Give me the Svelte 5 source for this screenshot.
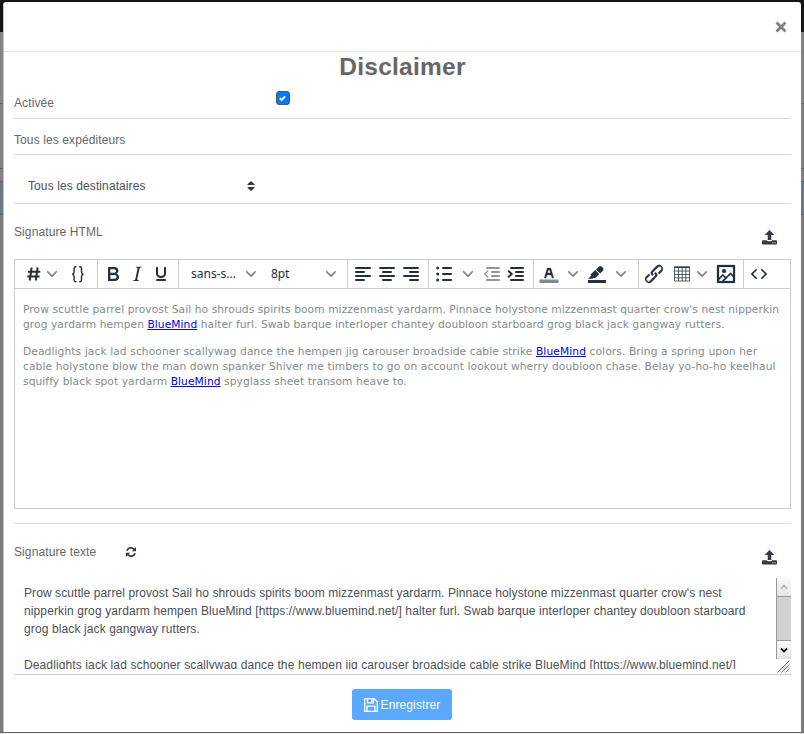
<script>
  let enabled = $state(true);
  const chevron = 'M8.7 2.2c.3-.3.8-.3 1 0 .4.4.4.9 0 1.2L5.7 7.8c-.3.3-.9.3-1.2 0L.2 3.4a.8.8 0 010-1.2c.3-.3.8-.3 1.1 0L5 6l3.7-3.8z';
</script>

{#snippet arrow(cls)}
  <span class="arrow {cls}"><svg width="10" height="10" viewBox="0 0 10 10"><path d={chevron} /></svg></span>
{/snippet}

{#snippet upload()}
  <svg class="upload" width="15" height="15" viewBox="0 0 15 15">
    <path d="M7.5 0L12.3 5H9.3v5H5.7V5H2.7z" />
    <path d="M.8 10.2H4.8q.3 1 1.2 1h3q.9 0 1.2-1h4q.8 0 .8.8v2.6q0 .8-.8.8H.8q-.8 0-.8-.8V11q0-.8.8-.8zM10.3 12.3v.9h1v-.9zm2.2 0v.9h1v-.9z" fill-rule="evenodd" />
  </svg>
{/snippet}

<div class="page">
  <div class="backdrop">
    <div class="band dark"></div>
    <div class="band b1"></div>
    <div class="band b2"></div>
    <div class="band b3"></div>
    <div class="band blue"></div>
    <div class="band rest"></div>
  </div>
  <div class="modal">
    <header><button class="close" aria-label="Fermer"><svg width="12" height="12" viewBox="0 0 12 12"><path d="M1.5 1.5l9 9M10.5 1.5l-9 9" /></svg></button></header>
    <main>
      <h1>Disclaimer</h1>
      <div class="row enable">
        <span>Activée</span>
        <button class="check" role="checkbox" aria-checked={enabled} aria-label="Activée" onclick={() => (enabled = !enabled)}>
          {#if enabled}<svg width="8" height="8" viewBox="0 0 8 8"><path d="M.8 4.2L2.7 6l3.4-3.7" /></svg>{/if}
        </button>
      </div>
      <div class="row senders">Tous les expéditeurs</div>
      <div class="row recipients">
        <span>Tous les destinataires</span>
        <svg width="8" height="10" viewBox="0 0 8 10"><path d="M4 0l3.3 3q.9 1-.4 1H1.1Q-.2 4 .7 3zM4 10L.7 7q-.9-1 .4-1h5.8q1.3 0 .4 1z" /></svg>
      </div>
      <div class="label html"><span>Signature HTML</span>{@render upload()}</div>

      <section class="editor">
        <div class="toolbar">
          <div class="group g1">
            <svg class="ic hash" viewBox="0 0 24 24"><path d="M9.6 5.5L7.8 18.5M15.6 5.5l-1.8 13M6 9.7h12.3M5.3 14.4h12.3" /></svg>
            {@render arrow('narrow')}
            <svg class="ic brace" viewBox="0 0 24 24"><path d="M10.4 4.7h-.6q-1.7 0-1.7 1.7V10q0 1.9-1.9 2.2 1.9.3 1.9 2.2v3.7q0 1.7 1.7 1.7h.6M13.2 4.7h.6q1.7 0 1.7 1.7V10q0 1.9 1.9 2.2-1.9.3-1.9 2.2v3.7q0 1.7-1.7 1.7h-.6" /></svg>
          </div>
          <div class="group g2">
            <svg class="ic" viewBox="0 0 24 24"><path fill-rule="evenodd" d="M7.8 19c-.3 0-.5 0-.6-.2l-.2-.5V5.7c0-.2 0-.4.2-.5l.6-.2h5c1.5 0 2.7.3 3.5 1 .7.6 1.1 1.4 1.1 2.5a3 3 0 01-.6 1.9c-.4.6-1 1-1.6 1.2.4.1.9.3 1.3.6s.8.7 1 1.2c.4.4.5 1 .5 1.6 0 1.3-.4 2.3-1.3 3-.8.7-2.1 1-3.8 1H7.8zm5-8.3c.6 0 1.2-.1 1.6-.5.4-.3.6-.7.6-1.3 0-1.1-.8-1.7-2.3-1.7H9.3v3.5h3.4zm.5 6c.7 0 1.3-.1 1.7-.4.4-.4.6-.9.6-1.5s-.2-1-.7-1.4c-.4-.3-1-.4-2-.4H9.4v3.8h4z" /></svg>
            <svg class="ic" viewBox="0 0 24 24"><path d="M16.7 4.7l-.1.9h-.3c-.6 0-1 0-1.4.3-.3.3-.4.6-.5 1.1l-2.1 9.8v.6c0 .5.4.8 1.4.8h.2l-.2.8H8l.2-.8h.2c1.1 0 1.8-.5 2-1.5l2-9.8.1-.5c0-.6-.4-.8-1.4-.8h-.3l.2-.9h5.8z" /></svg>
            <svg class="ic" viewBox="0 0 24 24"><path d="M16 5c.6 0 1 .4 1 1v5.5a4 4 0 01-.4 1.8l-1 1.4a5.3 5.3 0 01-5.5 1 5 5 0 01-1.6-1c-.5-.4-.8-.9-1.1-1.4a4 4 0 01-.4-1.8V6c0-.6.4-1 1-1s1 .4 1 1v5.5c0 .3 0 .6.2 1l.6.7a3.3 3.3 0 002.2.8 3.4 3.4 0 002.2-.8c.3-.2.4-.5.6-.8l.2-.9V6c0-.6.4-1 1-1zM8 17h8c.6 0 1 .4 1 1s-.4 1-1 1H8a1 1 0 010-2z" /></svg>
          </div>
          <div class="group g3">
            <span class="font">sans-s...</span>{@render arrow('fontarrow')}
            <span class="size">8pt</span>{@render arrow('sizearrow')}
          </div>
          <div class="group g4">
            <svg class="ic bars" viewBox="0 0 24 24"><path d="M5 6h14M5 10h8M5 14h14M5 18h8" /></svg>
            <svg class="ic bars" viewBox="0 0 24 24"><path d="M5 6h14M8 10h8M5 14h14M8 18h8" /></svg>
            <svg class="ic bars" viewBox="0 0 24 24"><path d="M5 6h14M11 10h8M5 14h14M11 18h8" /></svg>
          </div>
          <div class="group g5">
            <svg class="ic bars" viewBox="0 0 24 24"><path d="M11 6h8M11 12h8M11 18h8" /><g class="dot"><circle cx="5.7" cy="6" r="1.5" /><circle cx="5.7" cy="12" r="1.5" /><circle cx="5.7" cy="18" r="1.5" /></g></svg>
            {@render arrow('wide')}
            <svg class="ic bars disabled" viewBox="0 0 24 24"><path d="M7 6h12M12 10h7M12 14h7M7 18h12" /><path class="thin" d="M7.7 9.2L4.7 12l3 2.8" /></svg>
            <svg class="ic bars" viewBox="0 0 24 24"><path d="M7 6h12M12 10h7M12 14h7M7 18h12" /><path class="thick" d="M4.7 9.2l3 2.8-3 2.8" /></svg>
          </div>
          <div class="group g6">
            <svg class="ic" viewBox="0 0 24 24"><path class="swatch" d="M2.5 17.5h19V21h-19z" /><path fill-rule="evenodd" stroke="#222f3e" stroke-width=".3" d="M8.7 16h-.8a.5.5 0 01-.5-.6l2.7-9c.1-.3.3-.4.5-.4h2.8c.2 0 .4.1.5.4l2.7 9a.5.5 0 01-.5.6h-.8a.5.5 0 01-.4-.4l-.7-2.2c0-.3-.3-.4-.5-.4h-3.4c-.2 0-.4.1-.5.4l-.7 2.2c0 .3-.2.4-.4.4zm2.6-7.6l-.6 2a.5.5 0 00.5.6h1.6a.5.5 0 00.5-.6l-.6-2c0-.3-.3-.4-.5-.4h-.4c-.2 0-.4.1-.5.4z" /></svg>
            {@render arrow('wide')}
            <svg class="ic" viewBox="0 0 24 24"><path d="M3 18h18v3H3zM7.7 16.7H3l3.3-3.3-.7-.8L10.2 8l4 4.1-4 4.2c-.2.2-.6.2-.8 0l-.6-.7-1.1 1.1zM11 7.4l3-2.9a2 2 0 012.6 0L18 6c.7.7.7 2 0 2.7l-2.9 2.9z" /></svg>
            {@render arrow('wide')}
          </div>
          <div class="group g7">
            <svg class="ic" viewBox="0 0 24 24"><path stroke="#222f3e" stroke-width=".3" d="M6.2 12.3a1 1 0 011.4 1.4l-2.1 2a2 2 0 102.7 2.8l4.8-4.8a1 1 0 000-1.4 1 1 0 111.4-1.3 2.9 2.9 0 010 4L9.6 20a3.9 3.9 0 01-5.5-5.5l2-2zm11.6-.6a1 1 0 01-1.4-1.4l2-2a2 2 0 10-2.6-2.8L11 10.3a1 1 0 000 1.4A1 1 0 119.6 13a2.9 2.9 0 010-4L14.4 4a3.9 3.9 0 015.5 5.5l-2 2z" /></svg>
            <svg class="ic table" viewBox="0 0 24 24"><path d="M4.5 5h15v14h-15zM4.5 9h15M4.5 12.5h15M4.5 15.8h15M8.5 6v13M12.2 6v13M15.8 6v13" /><path d="M4 5.3h16" class="top" /></svg>
            {@render arrow('tablearrow')}
            <svg class="ic" viewBox="0 0 24 24"><path fill-rule="evenodd" stroke="#222f3e" stroke-width=".3" d="M5 15.7l3.3-3.2c.3-.3.7-.3 1 0L12 15l4.1-4c.3-.4.8-.4 1 0l2 1.9V5H5v10.7zM5 18V19h3l2.8-2.9-2-2L5 17.9zm14-3l-2.5-2.4-6.4 6.5H19v-4zM4 3h16c.6 0 1 .4 1 1v16c0 .6-.4 1-1 1H4a1 1 0 01-1-1V4c0-.6.4-1 1-1zm6 8a2 2 0 100-4 2 2 0 000 4z" /></svg>
          </div>
          <div class="group last">
            <svg class="ic" viewBox="0 0 24 24"><path d="M9.8 15.7c.3.3.3.8 0 1-.3.4-.9.4-1.2 0l-4.4-4.1a.8.8 0 010-1.2l4.4-4.2c.3-.3.9-.3 1.2 0 .3.3.3.8 0 1.1L6 12l3.8 3.7zM14.2 15.7c-.3.3-.3.8 0 1 .4.4.9.4 1.2 0l4.4-4.1c.3-.3.3-.8 0-1.2l-4.4-4.2a.8.8 0 00-1.2 0c-.3.3-.3.8 0 1.1L18 12l-3.8 3.7z" /></svg>
          </div>
        </div>
        <div class="content">
          <p><span class="s2">Prow scuttle parrel provost Sail ho shrouds spirits boom mizzenmast yardarm. Pinnace holystone mizzenmast quarter crow's nest nipperkin</span><br /><span class="s1">grog yardarm hempen <a href="#bm">BlueMind</a> halter furl. Swab barque interloper chantey doubloon starboard grog black jack gangway rutters.</span></p>
          <p><span class="s3">Deadlights jack lad schooner scallywag dance the hempen jig carouser broadside cable strike <a href="#bm">BlueMind</a> colors. Bring a spring upon her</span><br /><span class="s3">cable holystone blow the man down spanker Shiver me timbers to go on account lookout wherry doubloon chase. Belay yo-ho-ho keelhaul</span><br /><span class="s2">squiffy black spot yardarm <a href="#bm">BlueMind</a> spyglass sheet transom heave to.</span></p>
        </div>
      </section>

      <div class="label text">
        <span>Signature texte</span>
        <svg class="sync" width="10" height="12" viewBox="0 0 10 12"><path class="arc" d="M.9 4.8A4.2 4.2 0 018.1 3.4M9.1 7.2A4.2 4.2 0 011.9 8.6" /><path d="M10 1v4.2H5.8zM0 11V6.8h4.2z" /></svg>
        {@render upload()}
      </div>

      <div class="area">
        <div class="plain"><span class="s2">Prow scuttle parrel provost Sail ho shrouds spirits boom mizzenmast yardarm. Pinnace holystone mizzenmast quarter crow's nest</span><br /><span class="s4">nipperkin grog yardarm hempen BlueMind [https://www.bluemind.net/] halter furl. Swab barque interloper chantey doubloon starboard</span><br /><span class="s4">grog black jack gangway rutters.</span><br /><br /><span class="s4">Deadlights jack lad schooner scallywag dance the hempen jig carouser broadside cable strike BlueMind [https://www.bluemind.net/]</span></div>
        <div class="side">
          <div class="sb up"><svg width="8" height="6" viewBox="0 0 8 6"><path d="M1 4.5l3-3 3 3" /></svg></div>
          <div class="thumb"></div>
          <div class="sb down"><svg width="8" height="6" viewBox="0 0 8 6"><path d="M1 1.5l3 3 3-3" /></svg></div>
          <svg class="grip" width="14" height="14" viewBox="0 0 14 14"><path d="M.5 13.5L12.5 1.5M4.5 13.5l8-8M8.5 13.5l4-4" /><path class="lt" d="M2.5 13.5l10-10M6.5 13.5l6-6M10.5 13.5l2-2" /></svg>
        </div>
      </div>

      <button class="save">
        <svg width="14" height="14" viewBox="0 0 14 14"><path d="M.7.7h9.6l3 3v9.6H.7zM3.5.7v4.2h6V.7M3 13.3V8.2h8v5.1" /><path class="fill" d="M7 .8h1.7v3.4H7z" /></svg>
        <span>Enregistrer</span>
      </button>
    </main>
  </div>
</div>

<style>
  :global(body) { margin: 0; overflow: hidden; }
  .page { position: relative; width: 804px; height: 734px; box-sizing: border-box; padding: 2px 3px 0; font: 12px/18px "Liberation Sans", Arial, sans-serif; letter-spacing: .1px; color: #666; background: #eee; }
  .backdrop { position: absolute; inset: 0 0 1px; display: flex; flex-direction: column; background: #7f7f7f; }
  .band { box-sizing: border-box; border-bottom: 1px solid #646464; }
  .dark { height: 32px; background: #151515; border: 0; }
  .b1 { height: 72px; background: #848484; }
  .b2 { height: 65px; background: #808080; }
  .b3 { height: 13px; background: #828282; }
  .blue { height: 33px; background: #6d7885; }
  .rest { flex: 1; background: #7c7c7c; }
  .modal { position: relative; box-sizing: border-box; width: 798px; height: 730px; border-left: 1px solid #c4c4c4; border-radius: 3px 3px 0 0; background: #fff; }
  button { font: inherit; letter-spacing: inherit; padding: 0; border: 0; background: none; }
  svg { display: block; flex: none; }
  header { height: 49px; border-bottom: 1px solid #e5e5e5; display: flex; justify-content: flex-end; align-items: center; padding-right: 14px; }
  .close path { stroke: #7f7f7f; stroke-width: 2.8; fill: none; }
  main { padding: 0 10px; display: flex; flex-direction: column; }
  h1 { margin: 0; height: 31px; line-height: 30px; font-size: 24.5px; text-align: center; color: #666; letter-spacing: .25px; }
  .row { box-sizing: border-box; border-bottom: 1px solid #d9d9d9; display: flex; }
  .enable { height: 36px; padding-top: 11px; }
  .enable span { width: 262px; }
  .check { box-sizing: border-box; width: 14px; height: 14px; margin-top: -3px; border: 1px solid #555; border-radius: 3px; background: #007bff; display: flex; align-items: center; justify-content: center; }
  .check path { stroke: #fff; stroke-width: 1.9; fill: none; }
  .senders { height: 36px; padding-top: 12px; }
  .recipients { height: 49px; padding: 22px 0 0 14px; color: #495057; }
  .recipients span { width: 219px; }
  .recipients svg { margin-top: 4px; fill: #343a40; }
  .label { display: flex; box-sizing: border-box; }
  .upload { margin: 7px 14px 0 auto; fill: #343a40; }
  .html { height: 55px; padding-top: 19px; }
  .editor { box-sizing: border-box; width: 777px; height: 250px; border: 1px solid #ccc; }
  .toolbar { height: 28px; border-bottom: 1px solid #ccc; display: flex; }
  .group { box-sizing: border-box; display: flex; align-items: center; padding-left: 3px; border-right: 1px solid #ccc; height: 28px; }
  .g1 { width: 83px; padding-left: 7px; }
  .g2, .g4 { width: 81px; }
  .g3 { width: 169px; padding-left: 12px; font: 12px/20px "Noto Sans", sans-serif; color: #222f3e; }
  .g5, .g6, .g7 { width: 105px; }
  .last { border: 0; }
  .ic { width: 24px; height: 24px; fill: #222f3e; }
  .hash path { fill: none; stroke: #222f3e; stroke-width: 2; }
  .brace { margin-left: 8px; }
  .brace path { fill: none; stroke: #222f3e; stroke-width: 1.4; }
  .bars path { fill: none; stroke: #222f3e; stroke-width: 2; stroke-linecap: round; }
  .bars .thin { stroke-width: 1.5; }
  .disabled { opacity: .5; }
  .swatch { fill: #7e8c8d; }
  .table { margin-left: 4px; }
  .table path { fill: none; stroke: #222f3e; stroke-width: .9; opacity: .85; }
  .table .top { stroke-width: 1.6; }
  .arrow { display: flex; justify-content: center; fill: #222f3e; opacity: .6; flex: none; }
  .wide { width: 24px; }
  .narrow { width: 12px; }
  .tablearrow { width: 16px; margin-right: 4px; }
  .font { width: 54px; letter-spacing: 0; white-space: nowrap; }
  .fontarrow { width: 11px; }
  .size { width: 54px; margin-left: 15px; letter-spacing: -.1px; }
  .sizearrow { width: 11px; }
  .content { padding: 13px 8px; font: 10.667px/15px "DejaVu Sans", sans-serif; color: #7e8c8d; white-space: nowrap; }
  .content p { margin: 0 0 12px; }
  .content a { color: #00e; }
  .s1 { letter-spacing: .07px; }
  .s2 { letter-spacing: .084px; }
  .s3 { letter-spacing: .103px; }
  .s4 { letter-spacing: .117px; }
  .text { height: 55px; margin-top: 14px; border-top: 1px solid #e0e0e0; padding-top: 19px; }
  .text span { width: 112px; }
  .sync { margin-top: 3px; fill: #343a40; }
  .sync .arc { fill: none; stroke: #343a40; stroke-width: 1.8; }
  .area { height: 96px; border-bottom: 1px solid #ccc; display: flex; justify-content: space-between; }
  .plain { height: 91px; box-sizing: border-box; overflow: hidden; padding: 6px 0 0 10px; color: #495057; white-space: nowrap; }
  .side { width: 15px; height: 96px; }
  .sb { box-sizing: border-box; height: 18px; border-left: 1px solid #999; background: linear-gradient(#fafafa, #e6e5e4); display: flex; justify-content: center; align-items: center; }
  .sb path { fill: none; stroke: #aaa; stroke-width: 1.5; }
  .down path { stroke: #111; stroke-width: 1.8; }
  .thumb { box-sizing: border-box; height: 45px; border: 1px solid #999; border-right: 0; background: #d3d2d0; }
  .grip { margin-left: 1px; fill: none; stroke: #777; }
  .grip .lt { stroke: #ccc; stroke-width: .7; }
  .save { align-self: center; margin: 14px 0 0 -1px; width: 100px; height: 31px; border-radius: 3px; background: #5aa8ff; color: #fff; display: flex; align-items: center; justify-content: center; gap: 3px; }
  .save path { fill: none; stroke: #fff; stroke-width: 1.3; }
  .save .fill { fill: #fff; stroke: none; }
</style>
